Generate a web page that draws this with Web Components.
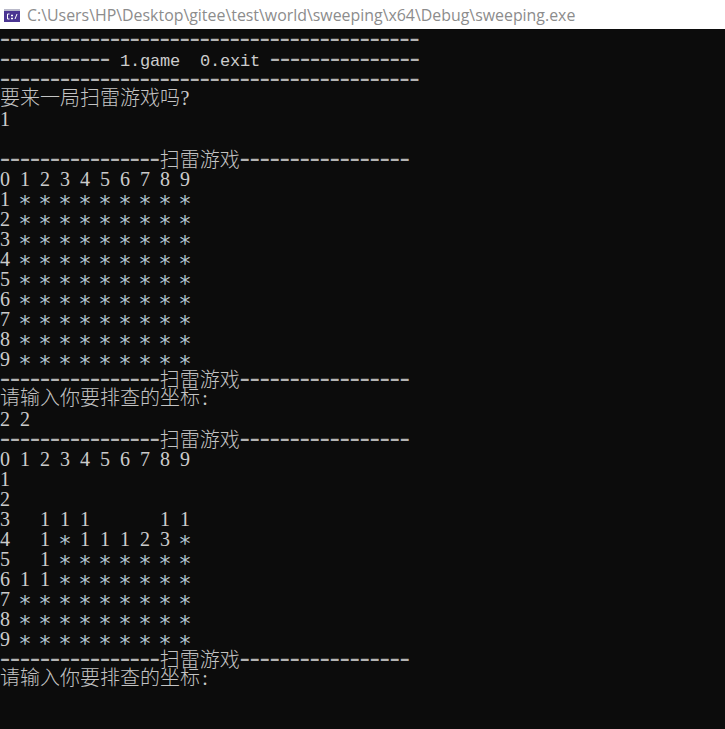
<!DOCTYPE html>
<html>
<head>
<meta charset="utf-8">
<style>
html, body { margin: 0; height: 100%; background: #0c0c0c; overflow: hidden; }
</style>
</head>
<body>
<console-window title="C:\Users\HP\Desktop\gitee\test\world\sweeping\x64\Debug\sweeping.exe"></console-window>
<script>
const DASH_LONG = '-'.repeat(42);
const BANNER = '-'.repeat(16) + '扫雷游戏' + '-'.repeat(17);
const PROMPT = '请输入你要排查的坐标:';
const HEADER = '0 1 2 3 4 5 6 7 8 9';
const hidden = n => n + ' * * * * * * * * *';

const OUTPUT = [
    DASH_LONG,
    '----------- 1.game  0.exit ---------------',
    DASH_LONG,
    '要来一局扫雷游戏吗?',
    '1',
    '',
    BANNER,
    HEADER,
    ...[1,2,3,4,5,6,7,8,9].map(hidden),
    BANNER,
    PROMPT,
    '2 2',
    BANNER,
    HEADER,
    '1',
    '2',
    '3   1 1 1       1 1',
    '4   1 * 1 1 1 2 3 *',
    '5   1 * * * * * * *',
    '6 1 1 * * * * * * *',
    hidden(7),
    hidden(8),
    hidden(9),
    BANNER,
    PROMPT
];

class ConsoleWindow extends HTMLElement {
    constructor() {
        super();
        this.attachShadow({mode:'open'});
        this.shadowRoot.innerHTML = `
            <style>
                :host {
                    display: flex;
                    flex-direction: column;
                    height: 100vh;
                    background: #0c0c0c;
                }
                header {
                    height: 29px;
                    flex: none;
                    background: #fff;
                    display: flex;
                    align-items: center;
                    gap: 7px;
                    padding-left: 4px;
                    font: 15.9px "Open Sans", "Noto Sans", sans-serif;
                    color: #8c8c8c;
                    white-space: nowrap;
                }
                svg { flex: none; margin-top: 1px; }
                main { flex: 1; }
            </style>
            <header>
                <svg width="16" height="13" viewBox="0 0 16 13">
                    <rect width="16" height="13" fill="#4b3592"/>
                    <rect width="16" height="2" fill="#b9b9c9"/>
                    <path d="M5.500 5H3.500v5h2M7.500 6h1v1h-1zM7.500 9h1v1h-1zM11 10l2-5" fill="none" stroke="#fff"/>
                </svg>
                <span id="title"></span>
            </header>
            <main><slot></slot></main>
        `;
        this.shadowRoot.querySelector('#title').textContent = this.getAttribute('title');
        const screen = document.createElement('console-screen');
        this.appendChild(screen);
        screen.write(OUTPUT);
    }
}

// splits a line into runs, each kind gets its own font so every cell stays 10px wide
const RUNS = /(-+)|(\*)|([0-9 ]+(?![.a-z]))|([0-9.a-z]+)|([?:])|([^-*0-9 .a-z?:]+)/g;
const KINDS = ['dash', 'star', 'num', 'latin', 'punct', 'cjk'];

class ConsoleScreen extends HTMLElement {
    constructor() {
        super();
        this.attachShadow({mode:'open'});
        this.shadowRoot.innerHTML = `
            <style>
                :host {
                    display: block;
                    color: #cccccc;
                    font: 20px/20px "Liberation Serif", "Noto Sans CJK SC", serif;
                }
                div { height: 20px; white-space: pre; }
                span { display: inline-block; }
                .num { word-spacing: 5px; }
                .dash { font-size: 30px; color: #b4b4b4; transform: translateY(-2px); }
                .star { width: 10px; font-family: "DejaVu Sans", sans-serif; font-size: 22px; color: #b4c6d2; transform: translate(-0.5px, 5px); }
                .latin { font: 17px/20px "Liberation Mono", monospace; letter-spacing: -0.2px; transform: translateY(-3px); }
                .punct { width: 10px; text-align: center; transform: translateY(-2px); }
                .cjk { font-family: "Noto Sans CJK SC", sans-serif; font-weight: 300; color: #c4c4c4; transform: translateY(-2px); }
            </style><section id="out"></section>
        `;
    }

    write(lines) {
        const out = this.shadowRoot.querySelector('#out');
        lines.forEach(line => {
            const row = document.createElement('div');
            for (const match of line.matchAll(RUNS)) {
                const span = document.createElement('span');
                span.className = KINDS[match.slice(1).findIndex(Boolean)];
                span.textContent = match[0];
                row.appendChild(span);
            }
            out.appendChild(row);
        });
    }
}

customElements.define('console-screen', ConsoleScreen);
customElements.define('console-window', ConsoleWindow);
</script>
</body>
</html>
